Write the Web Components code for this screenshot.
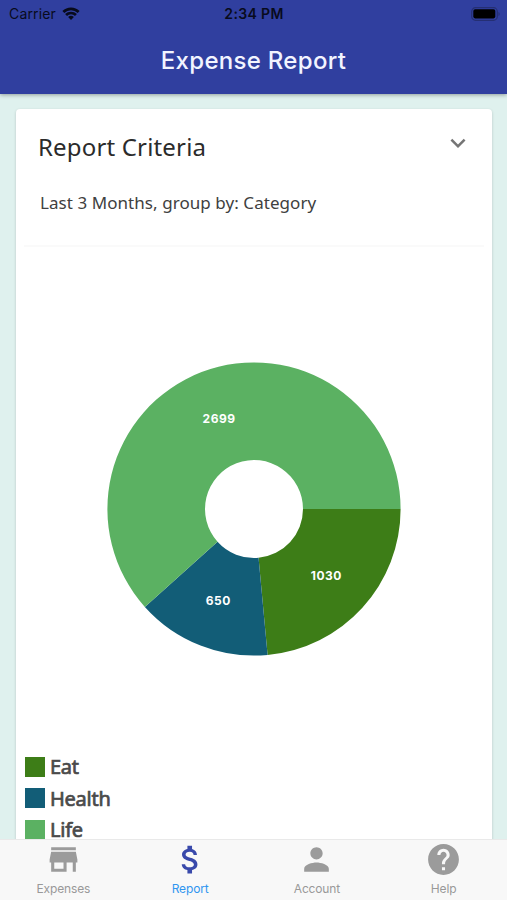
<!DOCTYPE html>
<html lang="en">
<head>
<meta charset="utf-8">
<title>Expense Report</title>
<style>
  body {
    margin: 0;
    height: 900px;
    overflow: hidden;
    font-family: Inter, "Liberation Sans", sans-serif;
  }
</style>
</head>
<body>
<expense-app>
  <status-bar slot="top" carrier="Carrier" time="2:34 PM"></status-bar>
  <title-bar slot="top">Expense Report</title-bar>

  <report-card>
    <criteria-panel>
      <span slot="title">Report Criteria</span>
      Last 3 Months, group by: Category
    </criteria-panel>
    <donut-chart values="1030,650,2699" colors="#3d7d17,#125d77,#5bb162"></donut-chart>
    <legend-item color="#3d7d17">Eat</legend-item>
    <legend-item color="#125d77">Health</legend-item>
    <legend-item color="#5bb162">Life</legend-item>
  </report-card>

  <tab-bar slot="bottom">
    <tab-item icon="store">Expenses</tab-item>
    <tab-item icon="money" active>Report</tab-item>
    <tab-item icon="person">Account</tab-item>
    <tab-item icon="help">Help</tab-item>
  </tab-bar>
</expense-app>

<script>
class BaseElement extends HTMLElement {
  constructor() {
    super();
    this.attachShadow({ mode: 'open' });
  }

  connectedCallback() {
    this.shadowRoot.innerHTML = this.render();
  }
}

class ExpenseApp extends BaseElement {
  render() {
    return `
      <style>
        :host {
          display: flex;
          flex-direction: column;
          height: 900px;
          background: #dff1ee;
        }
        header {
          flex: none;
          height: 94px;
          background: #303f9f;
          box-shadow: 0 1px 4px rgba(0, 0, 0, 0.35);
          z-index: 1;
        }
        main {
          flex: 1;
          min-height: 0;
          overflow: hidden;
          padding: 15px 15px 0 16px;
        }
      </style>
      <header><slot name="top"></slot></header>
      <main><slot></slot></main>
      <slot name="bottom"></slot>
    `;
  }
}

class StatusBar extends BaseElement {
  render() {
    return `
      <style>
        :host {
          display: grid;
          grid-template-columns: 1fr auto 1fr;
          align-items: center;
          height: 27px;
          padding: 0 6px 0 9px;
          font-size: 14px;
          color: #080b1c;
        }
        .left { display: flex; align-items: center; gap: 6px; }
        .carrier { letter-spacing: 0.15px; }
        .time { margin-left: -2px; font-weight: 600; letter-spacing: 0.35px; }
        .battery { justify-self: end; }
        svg { display: block; }
      </style>
      <div class="left">
        <span class="carrier">${this.getAttribute('carrier')}</span>
        <svg width="18" height="14" viewBox="0 0 19 15">
          <g fill="none" stroke="currentColor" stroke-width="2.9">
            <path d="M1.3 5.3a11.6 11.6 0 0 1 16.4 0"/>
            <path d="M4.2 8.6a7.5 7.5 0 0 1 10.6 0"/>
          </g>
          <path d="M9.5 13.9 6.4 10.8a4.4 4.4 0 0 1 6.2 0z" fill="currentColor"/>
        </svg>
      </div>
      <span class="time">${this.getAttribute('time')}</span>
      <svg class="battery" width="30" height="14" viewBox="0 0 30 14">
        <rect x="0.7" y="0.7" width="25.6" height="12.6" rx="3.8" fill="none" stroke="#252f73" stroke-width="1.2"/>
        <rect x="2.3" y="2.2" width="22" height="9.2" rx="1.8" fill="#000"/>
        <path d="M27.5 5v4c1.6-.6 1.6-3.4 0-4z" fill="#252f73"/>
      </svg>
    `;
  }
}

class TitleBar extends BaseElement {
  render() {
    return `
      <style>
        :host {
          display: flex;
          align-items: center;
          justify-content: center;
          height: 66px;
          color: #f2f4ff;
          font-size: 24px;
          font-weight: 500;
          letter-spacing: 0.3px;
        }
      </style>
      <slot></slot>
    `;
  }
}

class ReportCard extends BaseElement {
  render() {
    return `
      <style>
        :host {
          display: flex;
          flex-direction: column;
          height: 800px;
          background: #fff;
          border-radius: 4px;
          box-shadow: 0 1px 3px rgba(0, 0, 0, 0.18);
          font-family: "Noto Sans", sans-serif;
        }
      </style>
      <slot></slot>
    `;
  }
}

class CriteriaPanel extends BaseElement {
  render() {
    return `
      <style>
        :host {
          display: block;
          box-sizing: border-box;
          height: 138px;
          margin: 0 8px;
          padding: 20px 14px 0;
          border-bottom: 2px solid #fafafa;
          color: #404040;
        }
        .head {
          display: flex;
          justify-content: space-between;
          height: 36px;
          line-height: 36px;
          font-size: 24px;
          letter-spacing: 0.17px;
          color: #2b2b2b;
        }
        .body {
          padding: 25px 2px 0;
          line-height: 26px;
          font-size: 17px;
          letter-spacing: 0.06px;
        }
        svg { display: block; margin: -1px -3px 0 0; }
      </style>
      <div class="head">
        <slot name="title"></slot>
        <svg width="30" height="30" viewBox="0 0 24 24" fill="#757575">
          <path d="M16.59 8.59 12 13.17 7.41 8.59 6 10l6 6 6-6z"/>
        </svg>
      </div>
      <div class="body"><slot></slot></div>
    `;
  }
}

class DonutChart extends BaseElement {
  render() {
    const values = this.getAttribute('values').split(',').map(Number);
    const colors = this.getAttribute('colors').split(',');
    const total = values.reduce((a, b) => a + b, 0);
    const outer = 146.6;
    const inner = 49;
    const mid = (outer + inner) / 2;
    const point = (r, a) => `${(r * Math.cos(a)).toFixed(2)} ${(r * Math.sin(a)).toFixed(2)}`;

    // slices run clockwise from three o'clock
    let angle = 0;
    let slices = '';
    let labels = '';
    values.forEach((value, i) => {
      const end = angle + (value / total) * Math.PI * 2;
      const large = end - angle > Math.PI ? 1 : 0;
      const half = (angle + end) / 2;
      slices += `<path fill="${colors[i]}" d="M${point(outer, angle)}
        A${outer} ${outer} 0 ${large} 1 ${point(outer, end)}
        L${point(inner, end)}
        A${inner} ${inner} 0 ${large} 0 ${point(inner, angle)}z"/>`;
      labels += `<text x="${mid * Math.cos(half)}" y="${mid * Math.sin(half) + 5.4}">${value}</text>`;
      angle = end;
    });

    return `
      <style>
        :host {
          display: flex;
          justify-content: center;
          padding: 115px 0 95px;
        }
        svg { display: block; }
        text {
          fill: #fff;
          font: 700 12px Inter, sans-serif;
          letter-spacing: 0.5px;
          text-anchor: middle;
        }
      </style>
      <svg width="294" height="294" viewBox="-147 -147 294 294">${slices}${labels}</svg>
    `;
  }
}

class LegendItem extends BaseElement {
  render() {
    return `
      <style>
        :host {
          display: flex;
          align-items: center;
          gap: 5px;
          height: 31.6px;
          flex: none;
          padding-left: 9px;
          color: #4a4a4a;
          font-size: 20px;
          letter-spacing: -0.25px;
          -webkit-text-stroke: 0.7px #4a4a4a;
        }
        i {
          width: 20px;
          height: 20px;
          background: ${this.getAttribute('color')};
        }
      </style>
      <i></i><span><slot></slot></span>
    `;
  }
}

class TabBar extends BaseElement {
  render() {
    return `
      <style>
        :host {
          display: grid;
          grid-template-columns: repeat(4, 1fr);
          flex: none;
          box-sizing: border-box;
          height: 61px;
          background: #f8f8f8;
          border-top: 1px solid #e9e9e9;
          z-index: 1;
        }
      </style>
      <slot></slot>
    `;
  }
}

const ICONS = {
  store: 'M20 4H4v2h16V4zm1 10v-2l-1-5H4l-1 5v2h1v6h10v-6h4v6h2v-6h1zm-9 4H6v-4h6v4z',
  money: 'M11.8 10.9c-2.27-.59-3-1.2-3-2.15 0-1.09 1.01-1.85 2.7-1.85 1.78 0 2.44.85 2.5 2.1h2.21c-.07-1.72-1.12-3.3-3.21-3.81V3h-3v2.16c-1.94.42-3.5 1.68-3.5 3.61 0 2.31 1.91 3.46 4.7 4.13 2.5.6 3 1.48 3 2.41 0 .69-.49 1.79-2.7 1.79-2.06 0-2.87-.92-2.98-2.1h-2.2c.12 2.19 1.76 3.42 3.68 3.83V21h3v-2.15c1.95-.37 3.5-1.5 3.5-3.55 0-2.84-2.43-3.81-4.7-4.4z',
  person: 'M12 12c2.21 0 4-1.79 4-4s-1.79-4-4-4-4 1.79-4 4 1.79 4 4 4zm0 2c-2.67 0-8 1.34-8 4v2h16v-2c0-2.66-5.33-4-8-4z',
  help: 'M12 2C6.48 2 2 6.48 2 12s4.48 10 10 10 10-4.48 10-10S17.52 2 12 2zm1 17h-2v-2h2v2zm2.07-7.75l-.9.92C13.45 12.9 13 13.5 13 15h-2v-.5c0-1.1.45-2.1 1.17-2.83l1.24-1.26c.37-.36.59-.86.59-1.41 0-1.1-.9-2-2-2s-2 .9-2 2H8c0-2.21 1.79-4 4-4s4 1.79 4 4c0 .88-.36 1.68-.93 2.25z'
};

class TabItem extends BaseElement {
  render() {
    return `
      <style>
        :host {
          display: flex;
          flex-direction: column;
          align-items: center;
          padding-top: 1px;
          color: #999;
          font-size: 12px;
          letter-spacing: -0.15px;
        }
        :host([active]) { color: #3096f0; }
        svg { display: block; fill: #9b9b9b; }
        :host([active]) svg { fill: #3949ab; }
        span { margin-top: 3px; line-height: 15px; }
      </style>
      <svg width="37" height="37" viewBox="0 0 24 24"><path d="${ICONS[this.getAttribute('icon')]}"/></svg>
      <span><slot></slot></span>
    `;
  }
}

customElements.define('expense-app', ExpenseApp);
customElements.define('status-bar', StatusBar);
customElements.define('title-bar', TitleBar);
customElements.define('report-card', ReportCard);
customElements.define('criteria-panel', CriteriaPanel);
customElements.define('donut-chart', DonutChart);
customElements.define('legend-item', LegendItem);
customElements.define('tab-bar', TabBar);
customElements.define('tab-item', TabItem);
</script>
</body>
</html>
